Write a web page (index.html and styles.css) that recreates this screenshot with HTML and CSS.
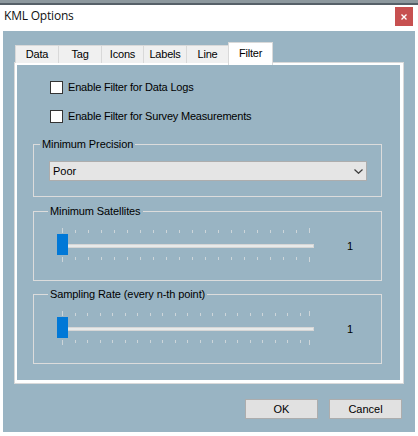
FILE: index.html
```html
<!DOCTYPE html>
<html>
<head>
<meta charset="utf-8">
<title>KML Options</title>
<link rel="stylesheet" href="styles.css">
</head>
<body>
<div class="window">
  <div class="topstrip"></div>
  <div class="titlebar">
    <span class="title">KML Options</span>
    <div class="close">
      <svg width="6" height="6" viewBox="0 0 6 6"><path d="M0.5 0.5L5.5 5.5M5.5 0.5L0.5 5.5" stroke="#fff" stroke-width="1.4" fill="none"/></svg>
    </div>
  </div>
  <div class="client">
    <div class="tabs">
      <div class="tab w44">Data</div>
      <div class="tab w44">Tag</div>
      <div class="tab w43">Icons</div>
      <div class="tab w44">Labels</div>
      <div class="tab w43">Line</div>
      <div class="tab active">Filter</div>
    </div>
    <div class="panel">
      <div class="page">
        <label class="check"><span class="box"></span><span>Enable Filter for Data Logs</span></label>
        <label class="check second"><span class="box"></span><span>Enable Filter for Survey Measurements</span></label>

        <fieldset class="group precision">
          <legend>Minimum Precision</legend>
          <div class="combo">
            <span>Poor</span>
            <svg class="chev" width="9" height="5" viewBox="0 0 9 5"><path d="M0.5 0.5L4.5 4.3L8.5 0.5" stroke="#3c3c3c" stroke-width="1.2" fill="none"/></svg>
          </div>
        </fieldset>

        <fieldset class="group trackgroup first">
          <legend>Minimum Satellites</legend>
          <div class="trackrow">
            <svg class="trackbar" width="257" height="35" viewBox="0 0 257 35" shape-rendering="crispEdges">
              <path class="ticks" d="M5.5 0v5M18.5 2v3M31.5 2v3M44.5 2v3M57.5 2v3M70.5 2v3M83.5 2v3M96.5 2v3M109.5 2v3M122.5 2v3M135.5 2v3M148.5 2v3M161.5 2v3M174.5 2v3M187.5 2v3M200.5 2v3M213.5 2v3M226.5 2v3M239.5 2v3M252.5 0v5"/>
              <path class="ticks" d="M5.5 29v5M18.5 29v3M31.5 29v3M44.5 29v3M57.5 29v3M70.5 29v3M83.5 29v3M96.5 29v3M109.5 29v3M122.5 29v3M135.5 29v3M148.5 29v3M161.5 29v3M174.5 29v3M187.5 29v3M200.5 29v3M213.5 29v3M226.5 29v3M239.5 29v3M252.5 29v5"/>
              <rect class="track" x="3.5" y="16.5" width="253" height="3"/>
              <rect class="thumb" x="0" y="6" width="11" height="21"/>
            </svg>
            <span class="value">1</span>
          </div>
        </fieldset>

        <fieldset class="group trackgroup">
          <legend>Sampling Rate (every n-th point)</legend>
          <div class="trackrow">
            <svg class="trackbar" width="257" height="35" viewBox="0 0 257 35" shape-rendering="crispEdges">
              <path class="ticks" d="M5.5 0v5M18.5 2v3M30.5 2v3M43.5 2v3M55.5 2v3M68.5 2v3M80.5 2v3M93.5 2v3M105.5 2v3M118.5 2v3M130.5 2v3M143.5 2v3M155.5 2v3M168.5 2v3M180.5 2v3M193.5 2v3M205.5 2v3M218.5 2v3M230.5 2v3M243.5 2v3M252.5 0v5"/>
              <path class="ticks" d="M5.5 29v5M18.5 29v3M30.5 29v3M43.5 29v3M55.5 29v3M68.5 29v3M80.5 29v3M93.5 29v3M105.5 29v3M118.5 29v3M130.5 29v3M143.5 29v3M155.5 29v3M168.5 29v3M180.5 29v3M193.5 29v3M205.5 29v3M218.5 29v3M230.5 29v3M243.5 29v3M252.5 29v5"/>
              <rect class="track" x="3.5" y="16.5" width="253" height="3"/>
              <rect class="thumb" x="0" y="6" width="11" height="21"/>
            </svg>
            <span class="value">1</span>
          </div>
        </fieldset>
      </div>
    </div>
    <div class="buttons">
      <button class="btn">OK</button>
      <button class="btn">Cancel</button>
    </div>
  </div>
</div>
</body>
</html>
```

FILE: styles.css
```css
* { box-sizing: border-box; }

html, body {
  margin: 0;
  padding: 0;
}

body {
  width: 418px;
  height: 436px;
  overflow: hidden;
  background: #ffffff;
  font-family: "Liberation Sans", Arial, sans-serif;
  font-size: 11px;
  color: #000;
}

.window {
  width: 418px;
  height: 436px;
  display: flex;
  flex-direction: column;
}

.topstrip {
  flex: none;
  height: 5px;
  background: linear-gradient(#8d989e 0 3px, #566068 3px 5px);
}

.titlebar {
  flex: none;
  height: 26px;
  display: flex;
  align-items: flex-start;
  padding-left: 4px;
}

.title {
  font-family: "Open Sans", "Noto Sans", sans-serif;
  font-size: 12px;
  line-height: 22px;
  letter-spacing: -0.2px;
  color: #111;
}

.close {
  margin-left: auto;
  margin-right: 5px;
  margin-top: 2px;
  width: 18px;
  height: 19px;
  background: #c75050;
  display: flex;
  align-items: center;
  justify-content: center;
}

.close svg { display: block; }

.client {
  flex: none;
  margin: 0 3px;
  height: 401px;
  background: #99b4c3;
  padding: 11px 11px 0 11px;
}

.tabs {
  display: flex;
  align-items: flex-end;
  height: 21px;
  padding-left: 1px;
}

.tab {
  height: 18px;
  border: 1px solid #d9d9d9;
  border-bottom: none;
  background: #f0f0f0;
  margin-right: -1px;
  text-align: center;
  line-height: 17px;
  white-space: nowrap;
  letter-spacing: -0.2px;
}

.w44 { width: 44px; }
.w43 { width: 43px; }

.tab.active {
  position: relative;
  z-index: 1;
  width: 45px;
  height: 23px;
  margin-bottom: -2px;
  background: #ffffff;
  line-height: 20px;
}

.panel {
  margin-top: -1px;
  width: 390px;
  height: 322px;
  border: 1px solid #d9d9d9;
  background: #ffffff;
  padding: 2px 3px 3px 2px;
}

.page {
  height: 100%;
  background: #99b4c3;
  padding-top: 16px;
  display: flex;
  flex-direction: column;
}

.check {
  display: flex;
  align-items: center;
  gap: 5px;
  height: 13px;
  margin-left: 33px;
  line-height: 13px;
  letter-spacing: -0.2px;
}

.check.second { margin-top: 16px; }

.box {
  width: 13px;
  height: 13px;
  border: 1px solid #333333;
  background: #ffffff;
  flex: none;
}

.group {
  margin: 15px 18px 0 16px;
  border: 1px solid #dcdcdc;
  padding: 10px 14px 15px 15px;
  min-width: 0;
}

.group legend {
  padding: 0 2px;
  margin-left: -9px;
  line-height: 13px;
  font-size: 11px;
  letter-spacing: -0.1px;
}

.combo {
  height: 20px;
  border: 1px solid #adadad;
  background: #e5e5e5;
  display: flex;
  align-items: center;
  justify-content: space-between;
  padding: 0 3px 0 3px;
}

.chev { display: block; }

.trackgroup {
  margin-top: 8px;
  padding: 10px 10px 17px 23px;
}

.trackgroup + .trackgroup { margin-top: 7px; }

.trackrow {
  display: flex;
  align-items: flex-start;
}

.trackbar { display: block; flex: none; }

.ticks {
  stroke: #cdd5d9;
  stroke-width: 1;
  fill: none;
}

.track {
  fill: #e7eaea;
  stroke: #d6d6d6;
  stroke-width: 1;
}

.thumb { fill: #0078d7; }

.value {
  margin-left: 33px;
  margin-top: 12px;
  line-height: 13px;
  color: #000;
}

.buttons {
  display: flex;
  justify-content: flex-end;
  gap: 11px;
  margin-top: 15px;
  padding-right: 2px;
}

.btn {
  width: 73px;
  height: 20px;
  border: 1px solid #adadad;
  background: #e1e1e1;
  font-family: "Liberation Sans", Arial, sans-serif;
  font-size: 11px;
  color: #000;
  padding: 0;
  margin: 0;
}
```
